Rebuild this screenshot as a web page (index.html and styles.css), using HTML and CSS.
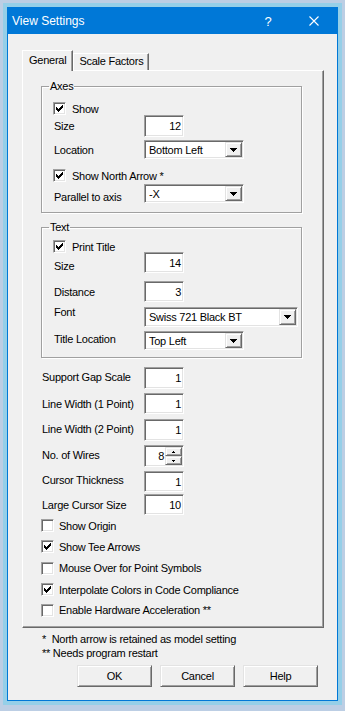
FILE: index.html
```html
<!DOCTYPE html>
<html lang="en">
<head>
    <meta charset="UTF-8">
    <meta name="viewport" content="width=device-width, initial-scale=1.0">
    <title>View Settings</title>
    <link rel="stylesheet" href="styles.css">
</head>
<body>

<!-- shared pixel glyphs -->
<svg class="defs" width="0" height="0">
    <symbol id="chk" viewBox="0 0 7 7">
        <path d="M6 0h1v1h-1z M5 1h2v1h-2z M0 2h1v1h-1z M4 2h3v1h-3z M0 3h2v1h-2z M3 3h3v1h-3z M0 4h5v1h-5z M1 5h3v1h-3z M2 6h1v1h-1z" fill="#000"/>
    </symbol>
    <symbol id="down" viewBox="0 0 7 4">
        <path d="M0 0h7v1h-7z M1 1h5v1h-5z M2 2h3v1h-3z M3 3h1v1h-1z" fill="#000"/>
    </symbol>
    <symbol id="tiny-up" viewBox="0 0 3 2">
        <path d="M1 0h1v1h-1z M0 1h3v1h-3z" fill="#000"/>
    </symbol>
    <symbol id="tiny-down" viewBox="0 0 3 2">
        <path d="M0 0h3v1h-3z M1 1h1v1h-1z" fill="#000"/>
    </symbol>
</svg>

<div class="window">
    <div class="frame">
        <div class="titlebar">
            <span class="title">View Settings</span>
            <span class="caption-btn help">?</span>
            <span class="caption-btn">
                <svg width="10" height="10" viewBox="0 0 10 10"><path d="M0.5 0.5L9.5 9.5M9.5 0.5L0.5 9.5" stroke="#fff" stroke-width="1.1"/></svg>
            </span>
        </div>

        <div class="dialog">
            <div class="tabs">
                <div class="tab active">General</div>
                <div class="tab">Scale Factors</div>
            </div>

            <div class="panel">
                <fieldset class="group">
                    <legend>Axes</legend>
                    <div class="row h13">
                        <span class="check"><svg width="7" height="7"><use href="#chk"/></svg></span>Show
                    </div>
                    <div class="row h22">
                        <span class="lbl">Size</span>
                        <span class="edit">12</span>
                    </div>
                    <div class="row h19 mt3">
                        <span class="lbl">Location</span>
                        <span class="combo"><span class="val">Bottom Left</span><span class="drop"><svg width="7" height="4"><use href="#down"/></svg></span></span>
                    </div>
                    <div class="row h13 mt10">
                        <span class="check"><svg width="7" height="7"><use href="#chk"/></svg></span>Show North Arrow *
                    </div>
                    <div class="row h19 mt2">
                        <span class="lbl down">Parallel to axis</span>
                        <span class="combo"><span class="val">-X</span><span class="drop"><svg width="7" height="4"><use href="#down"/></svg></span></span>
                    </div>
                </fieldset>

                <fieldset class="group text-group">
                    <legend>Text</legend>
                    <div class="row h13">
                        <span class="check"><svg width="7" height="7"><use href="#chk"/></svg></span>Print Title
                    </div>
                    <div class="row h21 mtn1">
                        <span class="lbl down">Size</span>
                        <span class="edit">14</span>
                    </div>
                    <div class="row h21 mt8">
                        <span class="lbl">Distance</span>
                        <span class="edit">3</span>
                    </div>
                    <div class="row h20 mt5">
                        <span class="lbl up">Font</span>
                        <span class="combo wide"><span class="val">Swiss 721 Black BT</span><span class="drop"><svg width="7" height="4"><use href="#down"/></svg></span></span>
                    </div>
                    <div class="row h19 mt4">
                        <span class="lbl up-small">Title Location</span>
                        <span class="combo"><span class="val">Top Left</span><span class="drop"><svg width="7" height="4"><use href="#down"/></svg></span></span>
                    </div>
                </fieldset>

                <div class="plain">
                    <div class="row h22 mt9">
                        <span class="lbl up-small">Support Gap Scale</span>
                        <span class="edit">1</span>
                    </div>
                    <div class="row h21 mt4">
                        <span class="lbl">Line Width (1 Point)</span>
                        <span class="edit">1</span>
                    </div>
                    <div class="row h22 mt5">
                        <span class="lbl up-small">Line Width (2 Point)</span>
                        <span class="edit">1</span>
                    </div>
                    <div class="row h22 mt4">
                        <span class="lbl up-small">No. of Wires</span>
                        <span class="spin">
                            <span class="num">8</span>
                            <span class="arrows">
                                <span><svg width="3" height="2"><use href="#tiny-up"/></svg></span>
                                <span><svg width="3" height="2"><use href="#tiny-down"/></svg></span>
                            </span>
                        </span>
                    </div>
                    <div class="row h21 mt4">
                        <span class="lbl up-small">Cursor Thickness</span>
                        <span class="edit">1</span>
                    </div>
                    <div class="row h21 mt2">
                        <span class="lbl">Large Cursor Size</span>
                        <span class="edit">10</span>
                    </div>
                </div>

                <div class="options">
                    <div class="row h21"><span class="check"></span>Show Origin</div>
                    <div class="row h21"><span class="check"><svg width="7" height="7"><use href="#chk"/></svg></span>Show Tee Arrows</div>
                    <div class="row h22"><span class="check"></span>Mouse Over for Point Symbols</div>
                    <div class="row h21"><span class="check"><svg width="7" height="7"><use href="#chk"/></svg></span>Interpolate Colors in Code Compliance</div>
                    <div class="row h20"><span class="check"></span>Enable Hardware Acceleration **</div>
                </div>
            </div>

            <div class="notes">
                <p>*&nbsp;&nbsp;North arrow is retained as model setting</p>
                <p>** Needs program restart</p>
            </div>

            <div class="buttons">
                <button class="btn">OK</button>
                <button class="btn">Cancel</button>
                <button class="btn">Help</button>
            </div>
        </div>
    </div>
</div>

</body>
</html>
```

FILE: styles.css
```css
* {
    box-sizing: border-box;
}

html, body {
    margin: 0;
    padding: 0;
}

body {
    height: 711px;
    overflow: hidden;
    background-color: #bccee4;
    font-family: "Liberation Sans", Arial, sans-serif;
    font-size: 11px;
    letter-spacing: -0.25px;
    color: #000;
}

.defs {
    position: absolute;
}

/* Window frame */
.window {
    margin: 3px;
    border: 4px solid #95cfe8;
}

.frame {
    height: 694px;
    border: 1px solid #0078d7;
    background-color: #f0f0f0;
}

.titlebar {
    height: 26px;
    display: flex;
    align-items: center;
    background-color: #0078d7;
    color: #fff;
    font-size: 12px;
    letter-spacing: 0;
}

.title {
    flex: 1;
    padding-left: 4px;
}

.caption-btn {
    width: 46px;
    height: 26px;
    display: flex;
    align-items: center;
    justify-content: center;
}

.caption-btn.help {
    font-size: 13px;
}

.dialog {
    padding: 16px 0 0 14px;
}

/* Tabs */
.tabs {
    height: 20px;
    display: flex;
    align-items: flex-end;
}

.tab {
    height: 17px;
    padding: 0 5px;
    line-height: 15px;
    border: 1px solid;
    border-bottom: none;
    border-color: #fff #696969 #fff #fff;
    box-shadow: inset -1px 0 0 #a0a0a0;
}

.tab.active {
    position: relative;
    z-index: 1;
    height: 21px;
    margin-bottom: -1px;
    padding: 0 6px;
    line-height: 18px;
    background-color: #f0f0f0;
}

.panel {
    width: 302px;
    height: 558px;
    padding: 9px 0 0 18px;
    border: 1px solid;
    border-color: #fff #696969 #696969 #fff;
    box-shadow: inset -1px -1px 0 #a0a0a0;
}

/* Group boxes */
.group {
    width: 261px;
    margin: 0;
    padding: 9px 0 9px 12px;
    border: 1px solid #a0a0a0;
    box-shadow: 1px 1px 0 #fff, inset 1px 1px 0 #fff;
}

.group legend {
    margin-left: -5px;
    padding: 0 1px;
    line-height: 13px;
}

.text-group {
    margin-top: 8px;
    padding: 6px 0 7px 12px;
}

/* Rows */
.row {
    display: flex;
    align-items: center;
}

.h13 { height: 13px; }
.h19 { height: 19px; }
.h20 { height: 20px; }
.h21 { height: 21px; }
.h22 { height: 22px; }

.mtn1 { margin-top: -1px; }
.mt2 { margin-top: 2px; }
.mt3 { margin-top: 3px; }
.mt4 { margin-top: 4px; }
.mt5 { margin-top: 5px; }
.mt8 { margin-top: 8px; }
.mt9 { margin-top: 9px; }
.mt10 { margin-top: 10px; }

.lbl {
    width: 90px;
}

.lbl.down {
    padding-top: 7px;
}

.lbl.up {
    padding-bottom: 10px;
}

.lbl.up-small {
    padding-bottom: 3px;
}

.plain {
    padding-left: 1px;
}

.plain .lbl {
    width: 102px;
}

/* Sunken controls */
.edit,
.combo,
.spin,
.check {
    background-color: #fff;
    border: 1px solid;
    border-color: #a0a0a0 #fff #fff #a0a0a0;
    box-shadow: inset 1px 1px 0 #696969, inset -1px -1px 0 #e3e3e3;
}

.edit {
    width: 40px;
    height: 100%;
    display: flex;
    align-items: center;
    justify-content: flex-end;
    padding-right: 2px;
}

.combo {
    width: 100px;
    height: 100%;
    display: flex;
    padding: 1px;
}

.combo.wide {
    width: 154px;
}

.combo .val {
    flex: 1;
    display: flex;
    align-items: center;
    padding-left: 3px;
}

.drop,
.arrows span,
.btn {
    border: 1px solid;
    border-color: #e3e3e3 #696969 #696969 #e3e3e3;
    box-shadow: inset 1px 1px 0 #fff, inset -1px -1px 0 #a0a0a0;
    background-color: #f0f0f0;
}

.drop {
    width: 17px;
    display: flex;
    align-items: center;
    justify-content: center;
}

.spin {
    width: 40px;
    height: 100%;
    display: flex;
    padding: 1px;
}

.spin .num {
    flex: 1;
    display: flex;
    align-items: center;
    justify-content: flex-end;
    padding-right: 1px;
}

.arrows {
    width: 17px;
    display: flex;
    flex-direction: column;
}

.arrows span {
    flex: 1;
    display: flex;
    align-items: center;
    justify-content: center;
}

/* Check boxes */
.check {
    width: 13px;
    height: 13px;
    flex-shrink: 0;
    margin-right: 5px;
    display: flex;
    align-items: center;
    justify-content: center;
}

.group .check {
    margin-left: -1px;
    margin-right: 6px;
}

.options .check {
    margin-right: 5px;
}

/* Footer */
.notes {
    margin-top: 4px;
    padding-left: 20px;
}

.notes p {
    margin: 0;
    line-height: 14px;
}

.buttons {
    margin-top: 5px;
    padding-left: 55px;
    display: flex;
    gap: 8px;
}

.btn {
    width: 75px;
    height: 22px;
    padding: 0;
    font-family: inherit;
    font-size: 11px;
    letter-spacing: -0.25px;
    color: #000;
}
```
